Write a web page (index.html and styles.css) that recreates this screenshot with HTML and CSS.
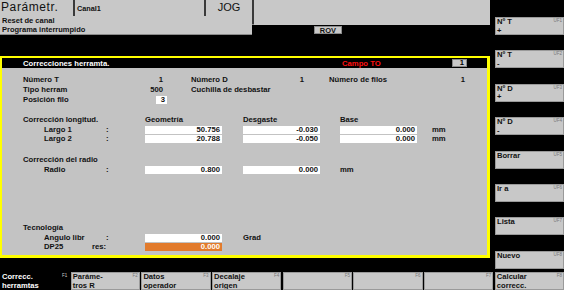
FILE: index.html
```html
<!DOCTYPE html>
<html lang="es">
<head>
    <meta charset="utf-8">
    <title>Correcciones herramta.</title>
    <link rel="stylesheet" href="styles.css">
</head>
<body>
    <div class="hmi">
        <div class="main">
            <div class="status-top">
                <div class="cell area">Parámetr.</div>
                <div class="cell canal">Canal1</div>
                <div class="cell mode">JOG</div>
                <div class="cell"></div>
            </div>
            <div class="status-row">
                <div class="cell msg">Reset de canal</div>
                <div class="cell"></div>
            </div>
            <div class="status-row last">
                <div class="cell msg">Programa interrumpido</div>
                <div class="rov-wrap"><span class="rov">ROV</span></div>
            </div>

            <section class="panel">
                <header class="panel-head">
                    <span class="panel-title">Correcciones herramta.</span>
                    <span class="campo">Campo TO</span>
                    <span class="to-box">1</span>
                </header>
                <div class="panel-body">
                    <div class="info">
                        <span class="row-start">Número T</span><span class="num">1</span>
                        <span class="col-d">Número D</span><span class="num">1</span>
                        <span class="col-f">Número de filos</span><span class="num">1</span>

                        <span class="row-start">Tipo herram</span><span class="num">500</span>
                        <span class="col-d wide">Cuchilla de desbastar</span>

                        <span class="row-start">Posición filo</span><span class="num"><span class="filo">3</span></span>
                    </div>

                    <div class="grid longitud">
                        <span class="title">Corrección longitud.</span>
                        <span class="c-geo">Geometría</span>
                        <span class="c-des">Desgaste</span>
                        <span class="c-base">Base</span>

                        <span class="sub">Largo 1</span><span class="colon">:</span>
                        <span class="box c-geo">50.756</span>
                        <span class="box c-des">-0.030</span>
                        <span class="box c-base">0.000</span>
                        <span class="c-unit">mm</span>

                        <span class="sub">Largo 2</span><span class="colon">:</span>
                        <span class="box c-geo">20.788</span>
                        <span class="box c-des">-0.050</span>
                        <span class="box c-base">0.000</span>
                        <span class="c-unit">mm</span>
                    </div>

                    <div class="grid radio">
                        <span class="title">Corrección del radio</span>
                        <span class="sub">Radio</span><span class="colon">:</span>
                        <span class="box c-geo">0.800</span>
                        <span class="box c-des">0.000</span>
                        <span class="c-base">mm</span>
                    </div>

                    <div class="grid tecno">
                        <span class="title">Tecnología</span>
                        <span class="sub">Angulo libr</span><span class="colon">:</span>
                        <span class="box c-geo">0.000</span>
                        <span class="c-des">Grad</span>

                        <span class="sub dp">DP25 <span>res:</span></span>
                        <span class="box c-geo active">0.000</span>
                    </div>
                </div>
            </section>
        </div>

        <aside class="vkeys">
            <div class="vkey"><b>Nº T<br>+</b><small>ÛF1</small></div>
            <div class="vkey"><b>Nº T<br>-</b><small>ÛF2</small></div>
            <div class="vkey"><b>Nº D<br>+</b><small>ÛF3</small></div>
            <div class="vkey"><b>Nº D<br>-</b><small>ÛF4</small></div>
            <div class="vkey"><b>Borrar</b><small>ÛF5</small></div>
            <div class="vkey"><b>Ir a</b><small>ÛF6</small></div>
            <div class="vkey"><b>Lista</b><small>ÛF7</small></div>
            <div class="vkey"><b>Nuevo</b><small>ÛF8</small></div>
        </aside>

        <nav class="hkeys">
            <div class="hkey on"><b>Correcc.<br>herramtas</b><small>F1</small></div>
            <div class="hkey"><b>Paráme-<br>tros R</b><small>F2</small></div>
            <div class="hkey"><b>Datos<br>operador</b><small>F3</small></div>
            <div class="hkey"><b>Decalaje<br>origen</b><small>F4</small></div>
            <div class="hkey"><b></b><small>F5</small></div>
            <div class="hkey"><b></b><small>F6</small></div>
            <div class="hkey"><b></b><small>F7</small></div>
            <div class="hkey"><b>Calcular<br>correcc.</b><small>F8</small></div>
        </nav>
    </div>
</body>
</html>
```

FILE: styles.css
```css
* {
    box-sizing: border-box;
}

body {
    margin: 0;
    background: #000;
    font-family: "Liberation Sans", Arial, sans-serif;
    color: #111;
}

.hmi {
    display: grid;
    grid-template-columns: 495px 69px;
    grid-template-rows: 271px 19px;
    width: 564px;
    height: 290px;
    overflow: hidden;
}

.main {
    width: 490px;
}

/* status bar */
.cell {
    background: #c8c8c8;
}

.status-top {
    display: grid;
    grid-template-columns: 73px 129px 46px 1fr;
    column-gap: 2px;
    height: 16px;
    background: #3a3a3a;
    border-bottom: 2px solid #3a3a3a;
}

.area {
    font-size: 12px;
    letter-spacing: 0.6px;
    line-height: 14px;
    padding-left: 1px;
}

.canal {
    font-size: 7.3px;
    font-weight: bold;
    line-height: 17px;
    padding-left: 2px;
}

.mode {
    font-size: 11px;
    line-height: 14px;
    text-align: center;
}

.status-row {
    display: grid;
    grid-template-columns: 252px 1fr;
    column-gap: 2px;
    height: 9px;
    background: #3a3a3a;
    border-bottom: 1px solid #8a8a8a;
}

.status-row.last {
    height: 10px;
    background: transparent;
    border-bottom: 0;
}

.status-row.last .msg {
    border-bottom: 1px solid #8a8a8a;
}

.msg {
    font-size: 7.5px;
    font-weight: bold;
    line-height: 9px;
    padding-left: 2px;
}

.rov-wrap {
    padding: 1px 0 0 60px;
}

.rov {
    display: block;
    width: 28px;
    height: 8px;
    background: #c8c8c8;
    border: 1px solid #8a8a8a;
    font-size: 7.5px;
    font-weight: bold;
    line-height: 7px;
    text-align: center;
}

/* tool offset panel */
.panel {
    margin-top: 21px;
    height: 202px;
    border: 2px solid #ffff00;
    border-right-width: 3px;
    border-bottom-width: 3px;
    background: #c3c3c3;
    font-size: 7.7px;
    font-weight: bold;
}

.panel-head {
    display: flex;
    align-items: center;
    height: 10px;
    padding-left: 21px;
    background: #000;
}

.panel-title {
    width: 319px;
    color: #fff;
}

.campo {
    width: 110px;
    color: #ff1010;
}

.to-box {
    width: 15px;
    height: 8px;
    background: #c8c8c8;
    border: 1px solid #888;
    line-height: 6px;
    text-align: right;
    padding-right: 2px;
    color: #000;
}

.panel-body {
    padding: 7px 0 0 21px;
}

.info {
    display: grid;
    grid-template-columns: 117px 26px 25px 89px 27px 22px 111px 28px;
    grid-auto-rows: 10px;
    line-height: 10px;
}

.row-start {
    grid-column: 1;
}

.col-d {
    grid-column: 4;
}

.col-f {
    grid-column: 7;
}

.info .wide {
    grid-column: 4 / 7;
}

.num {
    text-align: right;
    padding-right: 3px;
}

.filo {
    display: inline-block;
    width: 11px;
    height: 8px;
    margin-right: -4px;
    background: #fff;
    line-height: 8px;
    padding-right: 2px;
}

.grid {
    display: grid;
    grid-template-columns: 21px 62px 39px 77px 21px 77px 20px 77px 15px 40px;
    grid-auto-rows: 9px;
    line-height: 9px;
}

.grid .title {
    grid-column: 1 / 4;
    height: 10px;
}

.longitud {
    margin-top: 10px;
    grid-template-rows: 10px;
}

.radio {
    margin-top: 12px;
    grid-template-rows: 10px;
}

.tecno {
    margin-top: 49px;
    grid-template-rows: 10px;
}

.sub {
    grid-column: 2;
}

.colon {
    grid-column: 3;
}

.c-geo {
    grid-column: 4;
}

.c-des {
    grid-column: 6;
}

.c-base {
    grid-column: 8;
}

.c-unit {
    grid-column: 10;
}

.box {
    height: 8px;
    margin-top: 1px;
    background: #fff;
    text-align: right;
    padding-right: 2px;
    line-height: 8px;
}

.box.active {
    background: #e27b2c;
    color: #fff;
}

.dp {
    display: flex;
    justify-content: space-between;
    grid-column: 2 / 4;
    padding-right: 39px;
}

/* softkeys */
.vkeys {
    display: flex;
    flex-direction: column;
    gap: 15.4px;
    padding-top: 17px;
}

.vkey,
.hkey {
    position: relative;
    height: 18px;
    background: #c8c8c8;
    border: 1px solid #9a9a9a;
    font-size: 7.6px;
    line-height: 8.5px;
    padding-left: 1px;
    overflow: hidden;
}

.vkey small,
.hkey small {
    position: absolute;
    top: 0;
    right: 1px;
    font-size: 4.5px;
    line-height: 6px;
    color: #777;
}

.hkeys {
    grid-column: 1 / 3;
    display: grid;
    grid-template-columns: repeat(8, 1fr);
    column-gap: 1.5px;
    padding-top: 1px;
}

.hkey.on {
    background: #000;
    border-color: #000;
    color: #fff;
}

.hkey.on small {
    color: #ccc;
}
```
